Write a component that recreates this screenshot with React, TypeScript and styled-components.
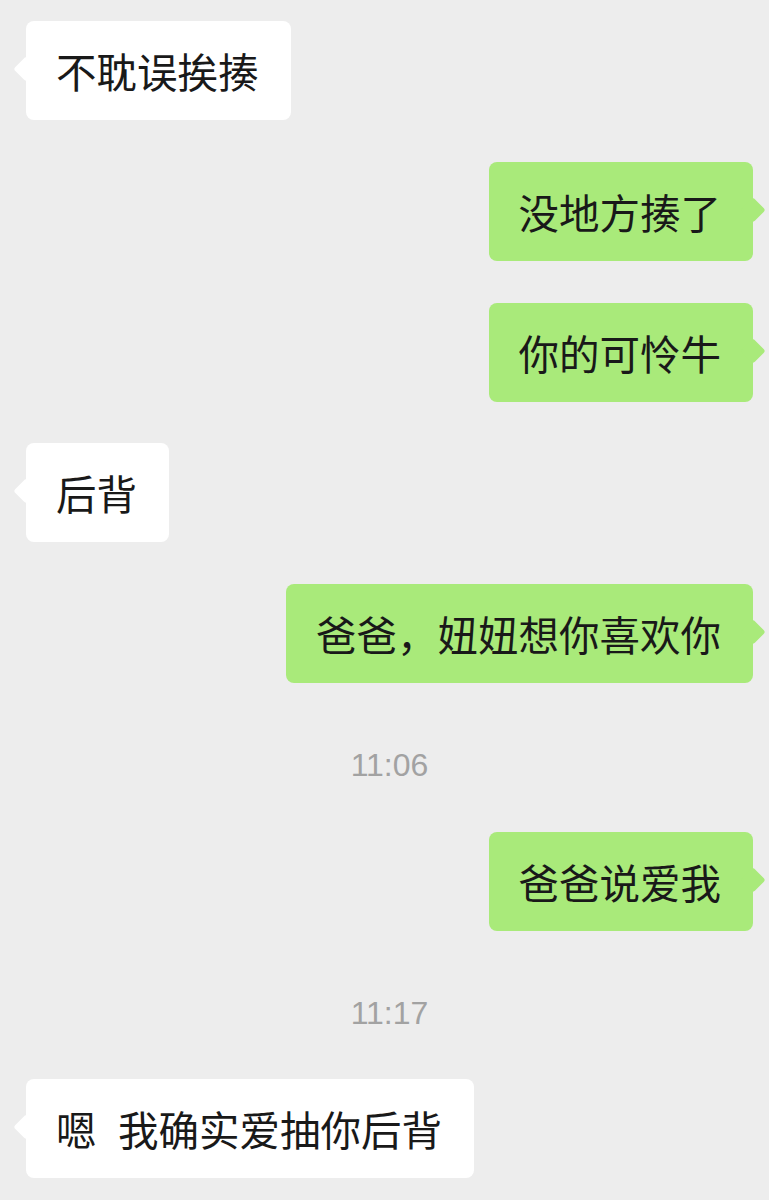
import React from "react";
import styled, { createGlobalStyle } from "styled-components";

const Global = createGlobalStyle`
  html, body {
    margin: 0;
    padding: 0;
    background: #ededed;
  }
  body {
    font-family: "Noto Sans CJK SC", "Noto Sans", sans-serif;
  }
`;

const Chat = styled.div`
  display: flex;
  flex-direction: column;
  gap: 41.75px;
  padding: 21px 16px 24px 26px;
  min-height: 1200px;
  box-sizing: border-box;
  background: #ededed;
`;

const Row = styled.div<{ $mine?: boolean }>`
  display: flex;
  justify-content: ${(p) => (p.$mine ? "flex-end" : "flex-start")};
`;

const Bubble = styled.div<{ $mine?: boolean }>`
  position: relative;
  background: ${(p) => (p.$mine ? "#a9ea7a" : "#ffffff")};
  color: #191919;
  border-radius: 8px;
  padding: 30px 32px 29px 30px;
  font-family: "Noto Sans CJK SC", "Noto Sans", sans-serif;
  font-size: 40.5px;
  line-height: 40px;
  white-space: pre;
  word-spacing: 12.5px;

  &::before {
    content: "";
    position: absolute;
    top: 39px;
    ${(p) => (p.$mine ? "right: -9px;" : "left: -9px;")}
    width: 18px;
    height: 18px;
    background: inherit;
    border-radius: 3px;
    transform: rotate(45deg);
  }
`;

const Time = styled.div`
  align-self: center;
  margin: 20.5px 0 4.5px;
  font-family: "Liberation Sans", Arial, sans-serif;
  font-size: 32px;
  line-height: 40px;
  color: #a2a2a2;
`;

type Item =
  | { kind: "msg"; mine: boolean; text: string }
  | { kind: "time"; text: string };

const items: Item[] = [
  { kind: "msg", mine: false, text: "不耽误挨揍" },
  { kind: "msg", mine: true, text: "没地方揍了" },
  { kind: "msg", mine: true, text: "你的可怜牛" },
  { kind: "msg", mine: false, text: "后背" },
  { kind: "msg", mine: true, text: "爸爸，妞妞想你喜欢你" },
  { kind: "time", text: "11:06" },
  { kind: "msg", mine: true, text: "爸爸说爱我" },
  { kind: "time", text: "11:17" },
  { kind: "msg", mine: false, text: "嗯 我确实爱抽你后背" },
];

export default function App() {
  return (
    <>
      <Global />
      <Chat>
        {items.map((it, i) =>
          it.kind === "time" ? (
            <Time key={i}>{it.text}</Time>
          ) : (
            <Row key={i} $mine={it.mine}>
              <Bubble $mine={it.mine}>{it.text}</Bubble>
            </Row>
          )
        )}
      </Chat>
    </>
  );
}
